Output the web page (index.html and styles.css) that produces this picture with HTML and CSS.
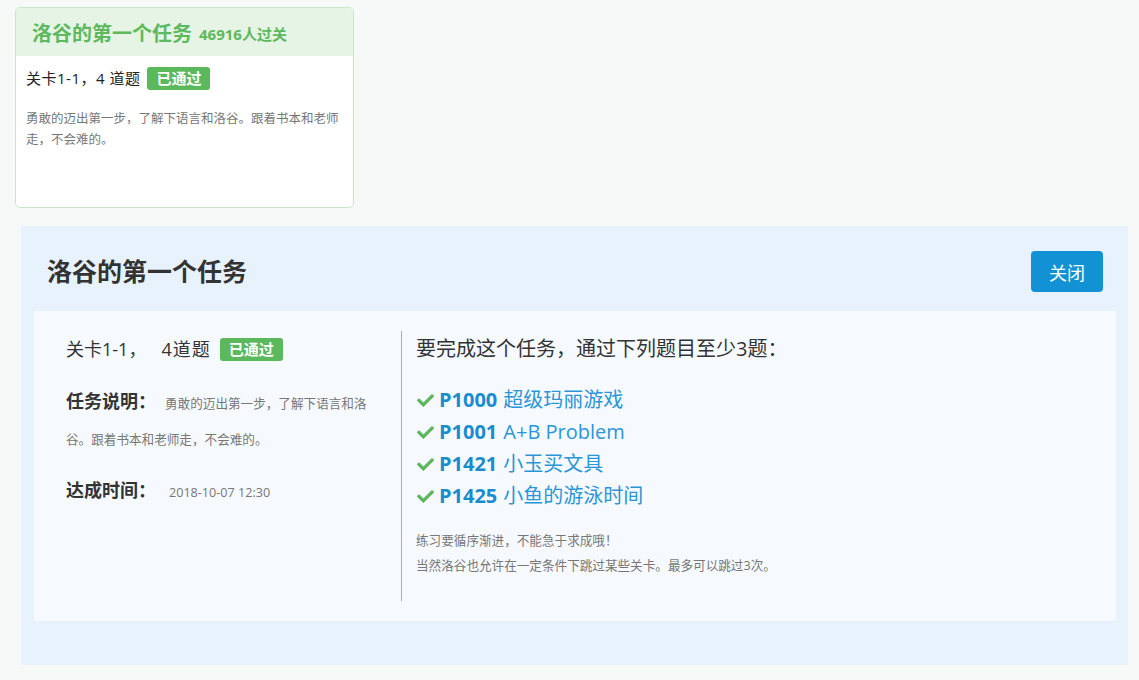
FILE: index.html
```html
<!DOCTYPE html>
<html lang="zh-CN">
<head>
<meta charset="utf-8">
<title>洛谷的第一个任务</title>
<link rel="stylesheet" href="styles.css">
</head>
<body>
<div class="page">
  <div class="card">
    <div class="card-head">
      <span class="card-title">洛谷的第一个任务</span>
      <span class="card-count">46916人过关</span>
    </div>
    <div class="card-body">
      <div class="card-line"><span class="card-level">关卡1-1，4 道题</span><span class="badge">已通过</span></div>
      <p class="card-desc">勇敢的迈出第一步，了解下语言和洛谷。跟着书本和老师走，不会难的。</p>
    </div>
  </div>

  <div class="panel">
    <div class="panel-head">
      <h2 class="panel-title">洛谷的第一个任务</h2>
      <button class="btn-close">关闭</button>
    </div>
    <div class="panel-inner">
      <div class="col-left">
        <div class="level-line"><span>关卡1-1，</span><span class="qcount">4道题</span><span class="badge badge-lg">已通过</span></div>
        <div class="info-block"><b class="label">任务说明：</b><span class="small">勇敢的迈出第一步，了解下语言和洛谷。跟着书本和老师走，不会难的。</span></div>
        <div class="info-block"><b class="label">达成时间：</b><span class="small date">2018-10-07 12:30</span></div>
      </div>
      <div class="col-right">
        <div class="req">要完成这个任务，通过下列题目至少3题：</div>
        <ul class="plist">
          <li><svg class="check" viewBox="0 0 512 512"><path d="M173.9 439.4l-166.4-166.4c-10-10-10-26.2 0-36.2l36.2-36.2c10-10 26.2-10 36.2 0L192 312.7 432.1 72.6c10-10 26.2-10 36.2 0l36.2 36.2c10 10 10 26.2 0 36.2l-294.4 294.4c-10 10-26.2 10-36.2 0z"/></svg><a class="pid">P1000</a> <a class="pname">超级玛丽游戏</a></li>
          <li><svg class="check" viewBox="0 0 512 512"><path d="M173.9 439.4l-166.4-166.4c-10-10-10-26.2 0-36.2l36.2-36.2c10-10 26.2-10 36.2 0L192 312.7 432.1 72.6c10-10 26.2-10 36.2 0l36.2 36.2c10 10 10 26.2 0 36.2l-294.4 294.4c-10 10-26.2 10-36.2 0z"/></svg><a class="pid">P1001</a> <a class="pname">A+B Problem</a></li>
          <li><svg class="check" viewBox="0 0 512 512"><path d="M173.9 439.4l-166.4-166.4c-10-10-10-26.2 0-36.2l36.2-36.2c10-10 26.2-10 36.2 0L192 312.7 432.1 72.6c10-10 26.2-10 36.2 0l36.2 36.2c10 10 10 26.2 0 36.2l-294.4 294.4c-10 10-26.2 10-36.2 0z"/></svg><a class="pid">P1421</a> <a class="pname">小玉买文具</a></li>
          <li><svg class="check" viewBox="0 0 512 512"><path d="M173.9 439.4l-166.4-166.4c-10-10-10-26.2 0-36.2l36.2-36.2c10-10 26.2-10 36.2 0L192 312.7 432.1 72.6c10-10 26.2-10 36.2 0l36.2 36.2c10 10 10 26.2 0 36.2l-294.4 294.4c-10 10-26.2 10-36.2 0z"/></svg><a class="pid">P1425</a> <a class="pname">小鱼的游泳时间</a></li>
        </ul>
        <div class="notes">
          <div>练习要循序渐进，不能急于求成哦！</div>
          <div>当然洛谷也允许在一定条件下跳过某些关卡。最多可以跳过3次。</div>
        </div>
      </div>
    </div>
  </div>
</div>
</body>
</html>
```

FILE: styles.css
```css
* { box-sizing: border-box; }
html, body { margin: 0; padding: 0; }
body {
  background: #f7f8f8;
  color: #333;
  font-family: "Open Sans", "Noto Sans CJK SC", sans-serif;
  text-spacing-trim: space-all;
  width: 1139px;
  height: 680px;
  overflow: hidden;
}
.page {
  padding: 7px 0 0 15px;
}

/* small card */
.card {
  width: 339px;
  height: 201px;
  background: #fff;
  border: 1px solid #c9e6c9;
  border-radius: 5px;
  overflow: hidden;
}
.card-head {
  height: 48px;
  background: #e5f4e5;
  padding: 0 16px;
  display: flex;
  align-items: center;
  gap: 7px;
  color: #5eb95e;
  font-weight: bold;
}
.card-title { font-size: 20px; }
.card-count { font-size: 15px; padding-top: 2px; }
.card-body {
  padding: 11px 10px 0 10px;
}
.card-line {
  font-size: 15px;
  line-height: 23px;
  display: flex;
  align-items: center;
  gap: 7px;
  color: #222;
}
.card-level { letter-spacing: 0.5px; }
.badge {
  display: inline-block;
  background: #5cb85c;
  color: #fff;
  font-weight: bold;
  font-size: 15px;
  line-height: 23px;
  height: 23px;
  padding: 0 9px;
  border-radius: 3px;
}
.card-desc {
  margin: 18px 0 0 0;
  font-size: 12.5px;
  line-height: 21px;
  color: #777;
}

/* panel */
.panel {
  margin: 18px 0 0 6px;
  width: 1107px;
  height: 439px;
  background: #e8f2fd;
  padding: 25px 12px 0 13px;
}
.panel-head {
  height: 60px;
  display: flex;
  justify-content: space-between;
  align-items: flex-start;
  padding: 0 13px 0 13px;
}
.panel-title {
  margin: 0;
  font-size: 25px;
  font-weight: bold;
  line-height: 41px;
  color: #333;
}
.btn-close {
  width: 72px;
  height: 41px;
  background: #1391d5;
  color: #fff;
  border: none;
  border-radius: 4px;
  font-family: "Open Sans", "Noto Sans CJK SC", sans-serif;
  font-size: 18px;
  padding: 0;
}
.panel-inner {
  height: 310px;
  background: #f6faff;
  padding: 20px 0;
  display: flex;
}
.col-left {
  width: 368px;
  padding: 0 32px;
  border-right: 1px solid #aaa;
}
.level-line {
  font-size: 18px;
  line-height: 36px;
  display: flex;
  align-items: center;
}
.qcount { margin-left: 15px; margin-right: 9px; letter-spacing: 1px; }
.info-block {
  margin-top: 17px;
  line-height: 34px;
}
.info-block + .info-block { margin-top: 16px; }
.label {
  font-size: 18px;
  font-weight: bold;
  color: #333;
  margin-right: 9px;
}
.small {
  font-size: 12.6px;
  color: #777;
}
.date { margin-left: 4px; }

.col-right {
  padding-left: 14px;
}
.req {
  font-size: 20px;
  line-height: 36px;
}
.plist {
  list-style: none;
  margin: 17px 0 0 0;
  padding: 0;
}
.plist li {
  font-size: 20px;
  line-height: 32px;
  display: flex;
  align-items: center;
  color: #1f8fd2;
}
.check {
  width: 17px;
  height: 17px;
  fill: #5cb85c;
  margin: 0 5px 0 1px;
}
.pid {
  font-weight: bold;
  color: #1b8bd0;
  margin-right: 6px;
}
.pname {
  color: #2a96d8;
}
.notes {
  margin-top: 16px;
  font-size: 12.6px;
  line-height: 25px;
  color: #777;
}
```
